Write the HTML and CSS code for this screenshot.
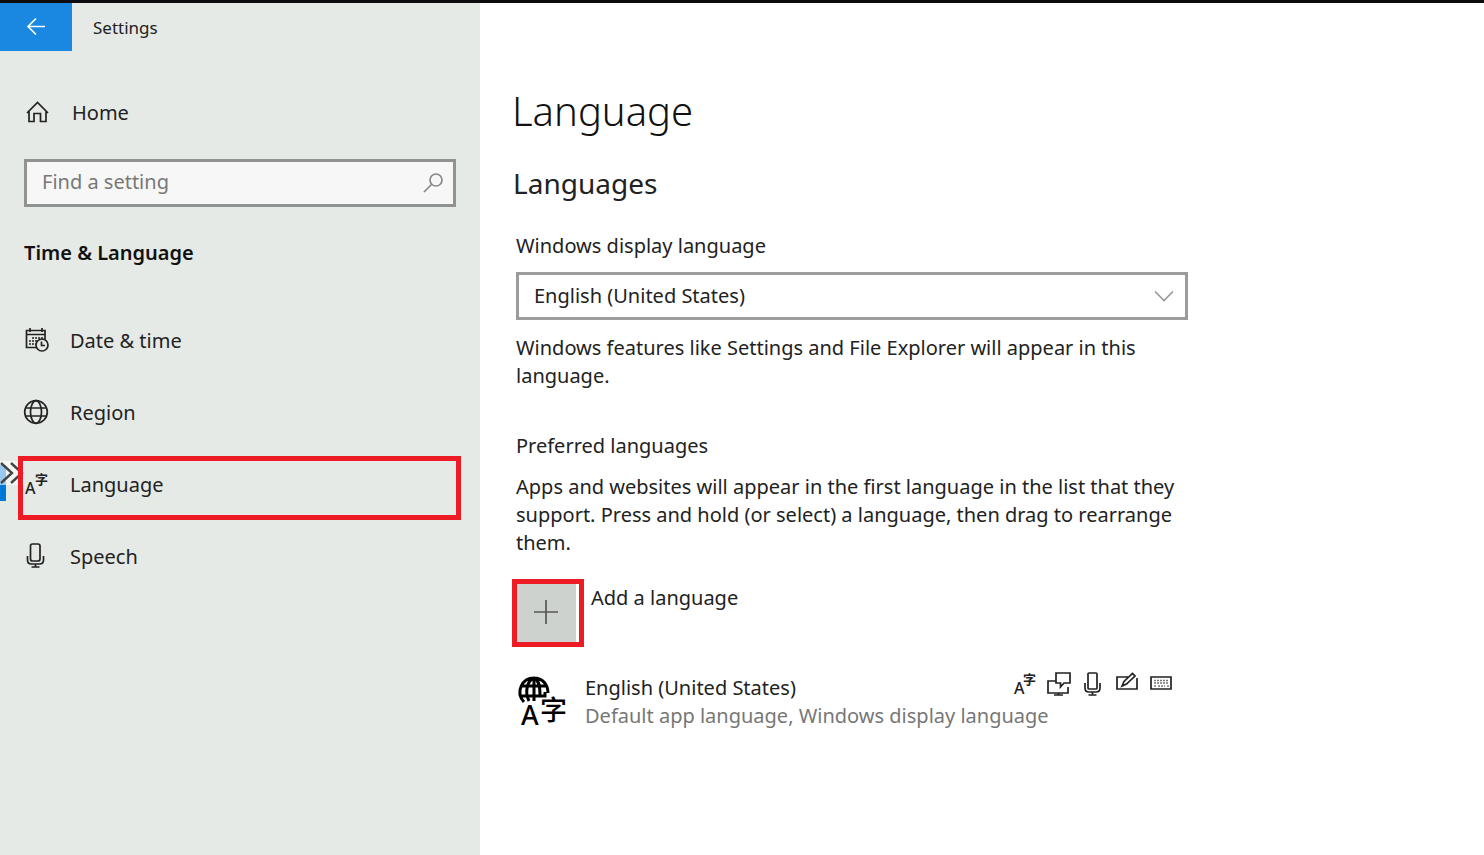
FILE: index.html
```html
<!DOCTYPE html>
<html lang="en">
<head>
<meta charset="utf-8">
<meta name="viewport" content="width=device-width, initial-scale=1">
<title>Settings</title>
<link rel="stylesheet" href="styles.css">
</head>
<body>
<div class="window">
  <aside class="sidebar">
    <header class="titlebar">
      <button class="back" type="button" aria-label="Back">
        <svg width="20" height="20" viewBox="0 0 20 20"><path d="M19 9.500H2M10 1.500l-8 8 8 8"/></svg>
      </button>
      <span class="app-name">Settings</span>
    </header>
    <a class="home" href="#home">
      <svg class="icon" viewBox="0 0 24 24"><path d="M3 12L13.500 1.500 24 12M5 10.500v10h5v-8h6.500v8h5.500v-10"/></svg>
      <span>Home</span>
    </a>
    <div class="search">
      <input type="text" aria-label="Find a setting" placeholder="Find a setting">
      <svg width="20" height="20" viewBox="0 0 20 20"><circle cx="13" cy="7" r="6"/><path d="M8.500 11.500L1 19"/></svg>
    </div>
    <h2 class="group">Time &amp; Language</h2>
    <nav class="nav">
      <a class="item" href="#date">
        <svg class="icon" viewBox="0 0 24 24"><path d="M13 18.500H2.500V1.500H21v9M2 5.500h19M6 -1v4M18 -1v4"/><path class="dots" d="M8 9h11M5 12h9M5 15h7"/><circle cx="18" cy="16" r="6"/><path d="M17.500 12.500v4H21"/></svg>
        <span>Date &amp; time</span>
      </a>
      <a class="item" href="#region">
        <svg class="icon" viewBox="0 0 24 24"><circle cx="12" cy="11" r="11.300"/><ellipse cx="12" cy="11" rx="5.500" ry="11.300"/><path d="M2 7h20M2 15h20"/></svg>
        <span>Region</span>
      </a>
      <a class="item current" href="#language" aria-current="page">
        <svg class="pointer" width="24" height="40" viewBox="0 0 24 40"><path class="accent" d="M0 4h6v36H0z"/><path class="veil" d="M0 0h24v24H0z"/><path class="chevrons" d="M1 2l11 10L1 22M11 2l11 10-11 10"/></svg>
        <svg class="icon" viewBox="0 0 24 24"><text x="1" y="21" class="latin-sign">A</text><text x="11" y="11" class="han-sign">字</text></svg>
        <span>Language</span>
      </a>
      <a class="item" href="#speech">
        <svg class="icon" viewBox="0 0 24 24"><rect x="6.500" y="-1" width="9.500" height="17" rx="2"/><path d="M3.500 11v4q0 4 4 4h8q4 0 4-4v-4M11.500 19v3M7.500 22h8"/></svg>
        <span>Speech</span>
      </a>
    </nav>
  </aside>
  <main class="content">
    <h1>Language</h1>
    <h2 class="section">Languages</h2>
    <label class="label" for="display">Windows display language</label>
    <div class="picker">
      <select id="display"><option>English (United States)</option></select>
      <svg width="20" height="12" viewBox="0 0 20 12"><path d="M1 1.500l9 9 9-9"/></svg>
    </div>
    <p class="note">Windows features like Settings and File Explorer will appear in this language.</p>
    <h3 class="label">Preferred languages</h3>
    <p class="note order">Apps and websites will appear in the first language in the list that they support. Press and hold (or select) a language, then drag to rearrange them.</p>
    <div class="add">
      <button id="add" class="plus" type="button" aria-labelledby="add-label">
        <svg width="24" height="24" viewBox="0 0 24 24"><path d="M11 -1v24M-1 11h24"/></svg>
      </button>
      <label id="add-label" for="add">Add a language</label>
    </div>
    <div class="language">
      <svg class="emblem" width="50" height="50" viewBox="0 0 50 50">
        <path d="M8 25C-1 15 6 1 18 1c8 0 14 6 14 15M5 9h26M5 19h24V15M13 24C8 14 12 3 18 1c5 2 6 8 6 17M18 1v23"/>
        <text x="5" y="48" class="latin-sign">A</text>
        <text x="24" y="43" class="han-sign">字</text>
      </svg>
      <div class="details">
        <span>English (United States)</span>
        <div class="features">
          <svg viewBox="0 0 24 24"><text x="0" y="20" class="latin-sign">A</text><text x="9" y="10" class="han-sign">字</text></svg>
          <svg viewBox="0 0 24 24"><path d="M8 7H0v12h20v-6M6 21h9M10.500 19v2M8 -1h14v10h-6l-3.500 4V9H8z"/></svg>
          <svg viewBox="0 0 24 24"><rect x="6" y="-1" width="9" height="16" rx="1"/><path d="M3 9v5q0 4 4 4h7q4 0 4-4V9M10.500 18v3M6.500 21h8"/></svg>
          <svg viewBox="0 0 24 24"><path d="M12 3H1v12h20V4M6 12l2-4.500 8.500-8 2.500 2.500-8.500 8z"/></svg>
          <svg viewBox="0 0 24 24"><path d="M1 3h20v12H1z"/><path class="keys" d="M4 6.500h15M4 9h15M4 12h2M8 12h7M17 12h2"/></svg>
        </div>
        <span class="muted">Default app language, Windows display language</span>
      </div>
    </div>
  </main>
</div>
</body>
</html>
```
FILE: styles.css
```css
* { box-sizing: border-box; }

body {
  margin: 0;
  font: 20px/28px "Noto Sans", "Noto Sans CJK SC", sans-serif;
  color: #222;
  background: #fff;
}

h1, h2, h3, p { margin: 0; font-weight: 400; }
a { color: inherit; text-decoration: none; }
button, input, select { font: inherit; color: inherit; border-radius: 0; }
svg { display: block; flex: none; fill: none; stroke: currentColor; stroke-width: 1.7; overflow: visible; }
svg text { fill: currentColor; stroke: none; }
.latin-sign { font: 500 16px "Noto Sans", sans-serif; }
.han-sign { font: 700 13px "Noto Sans CJK SC", sans-serif; }

.window {
  display: grid;
  grid-template-columns: 480px 1fr;
  min-height: 100vh;
  border-top: 3px solid #0c0c0e;
}

.sidebar { background: #e6eae6; }
.titlebar { display: flex; align-items: center; gap: 21px; height: 48px; font-size: 17px; }
.app-name { padding-top: 2px; }
.back {
  display: flex;
  align-items: center;
  justify-content: center;
  width: 72px;
  height: 48px;
  padding: 0;
  border: 0;
  color: #fff;
  background: #1a88e0;
}
.home { display: flex; align-items: center; gap: 24px; height: 48px; margin: 38px 24px 0; }
.icon { width: 24px; height: 24px; }

.search { display: flex; align-items: center; margin: 22px 24px 0; height: 48px; padding-right: 10px; border: 3px solid #919391; background: #f7f7f7; color: #888; }
.search input { flex: 1; min-width: 0; padding: 0 0 2px 15px; border: 0; outline: 0; background: none; }
.search input::placeholder { color: #777; opacity: 1; }
.group { margin: 32px 24px 0; font-size: 20px; font-weight: 600; color: #111; }

.nav { margin-top: 38px; }
.item { position: relative; display: flex; align-items: center; gap: 22px; height: 72px; padding: 0 24px; }
.current::after { content: ""; position: absolute; inset: 7px 19px 1px 18px; border: 5px solid #ed1c24; }
.pointer { position: absolute; left: 0; top: 12px; }
.pointer .accent { fill: #0078d7; stroke: none; }
.pointer .veil { fill: #fff; fill-opacity: .6; stroke: none; }
.pointer .chevrons { stroke: #444; stroke-width: 2.400; }
.dots { stroke-dasharray: 2 1; }

.content { max-width: 744px; padding: 80px 36px 0; }
h1 { font-size: 40px; font-weight: 300; line-height: 56px; margin-left: -4px; color: #111; }
.section { margin: 26px 0 0 -3px; font-size: 28px; line-height: 36px; }
.label { display: block; margin-top: 31px; font-size: 20px; }
.picker { display: flex; align-items: center; margin-top: 12px; height: 48px; border: 3px solid #9c9c9c; color: #999; }
.picker select { flex: 1; height: 100%; margin-right: -40px; padding: 0 40px 0 15px; border: 0; appearance: none; background: none; color: #222; }
.picker svg { margin-right: 11px; pointer-events: none; }
.note { margin-top: 14px; }
.note + .label { margin-top: 42px; }
.order { margin-top: 13px; }

.add { display: flex; gap: 7px; margin: 22px 0 0 -4px; }
.add label { padding-top: 5px; }
.plus { display: flex; align-items: center; justify-content: center; width: 72px; height: 68px; padding: 0 3px 0 0; border: 5px solid #ed1c24; background: #ced2ce content-box; color: #555; }

.language { display: flex; margin-top: 27px; }
.emblem { margin-top: 3px; color: #000; stroke-width: 3; }
.emblem .latin-sign { font-size: 27px; }
.emblem .han-sign { font-size: 27px; font-weight: 500; }
.details { display: grid; grid-template-columns: 1fr auto; flex: 1; margin-left: 19px; }
.muted { grid-column: 1 / -1; color: #777; }
.features { display: flex; gap: 10px; margin-right: 14px; }
.features svg { width: 24px; height: 24px; }
.keys { stroke: #777; stroke-dasharray: 2 1; }
```
